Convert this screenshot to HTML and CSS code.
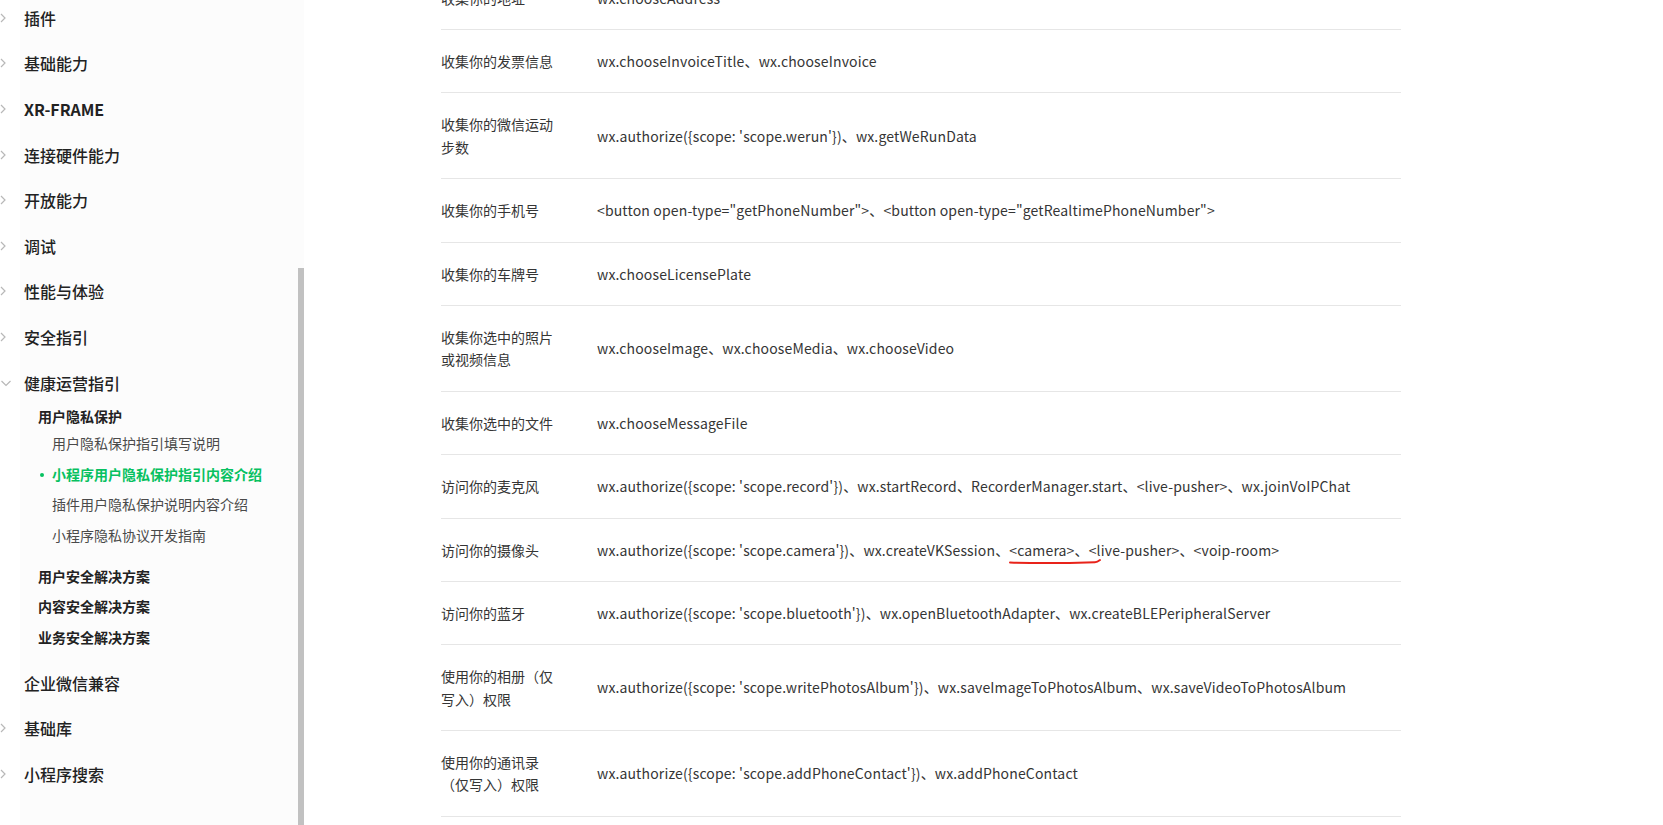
FILE: index.html
```html
<!DOCTYPE html>
<html lang="zh-CN">
<head>
  <meta charset="UTF-8">
  <title>小程序用户隐私保护指引内容介绍</title>
  <link rel="stylesheet" href="styles.css">
</head>
<body>

<div class="layout">
  <aside class="sidebar">
    <nav class="nav">
      <div class="nav-item"><span class="arrow"><svg width="8" height="10" viewBox="0 0 8 10"><path d="M1 1l4 4-4 4" fill="none" stroke="#b8b8b8" stroke-width="1.2"/></svg></span>插件</div>
      <div class="nav-item"><span class="arrow"><svg width="8" height="10" viewBox="0 0 8 10"><path d="M1 1l4 4-4 4" fill="none" stroke="#b8b8b8" stroke-width="1.2"/></svg></span>基础能力</div>
      <div class="nav-item latin"><span class="arrow"><svg width="8" height="10" viewBox="0 0 8 10"><path d="M1 1l4 4-4 4" fill="none" stroke="#b8b8b8" stroke-width="1.2"/></svg></span>XR-FRAME</div>
      <div class="nav-item"><span class="arrow"><svg width="8" height="10" viewBox="0 0 8 10"><path d="M1 1l4 4-4 4" fill="none" stroke="#b8b8b8" stroke-width="1.2"/></svg></span>连接硬件能力</div>
      <div class="nav-item"><span class="arrow"><svg width="8" height="10" viewBox="0 0 8 10"><path d="M1 1l4 4-4 4" fill="none" stroke="#b8b8b8" stroke-width="1.2"/></svg></span>开放能力</div>
      <div class="nav-item"><span class="arrow"><svg width="8" height="10" viewBox="0 0 8 10"><path d="M1 1l4 4-4 4" fill="none" stroke="#b8b8b8" stroke-width="1.2"/></svg></span>调试</div>
      <div class="nav-item"><span class="arrow"><svg width="8" height="10" viewBox="0 0 8 10"><path d="M1 1l4 4-4 4" fill="none" stroke="#b8b8b8" stroke-width="1.2"/></svg></span>性能与体验</div>
      <div class="nav-item"><span class="arrow"><svg width="8" height="10" viewBox="0 0 8 10"><path d="M1 1l4 4-4 4" fill="none" stroke="#b8b8b8" stroke-width="1.2"/></svg></span>安全指引</div>
      <div class="nav-item"><span class="arrow"><svg width="12" height="8" viewBox="0 0 12 8"><path d="M1.5 2l4.5 4.5 4.5-4.5" fill="none" stroke="#b8b8b8" stroke-width="1.2"/></svg></span>健康运营指引</div>

      <div class="sub">
        <div class="sub-title">用户隐私保护</div>
        <ul class="leaves">
          <li>用户隐私保护指引填写说明</li>
          <li class="active">小程序用户隐私保护指引内容介绍</li>
          <li>插件用户隐私保护说明内容介绍</li>
          <li>小程序隐私协议开发指南</li>
        </ul>
        <div class="sub-title">用户安全解决方案</div>
        <div class="sub-title">内容安全解决方案</div>
        <div class="sub-title">业务安全解决方案</div>
      </div>

      <div class="nav-item"><span class="arrow"></span>企业微信兼容</div>
      <div class="nav-item"><span class="arrow"><svg width="8" height="10" viewBox="0 0 8 10"><path d="M1 1l4 4-4 4" fill="none" stroke="#b8b8b8" stroke-width="1.2"/></svg></span>基础库</div>
      <div class="nav-item"><span class="arrow"><svg width="8" height="10" viewBox="0 0 8 10"><path d="M1 1l4 4-4 4" fill="none" stroke="#b8b8b8" stroke-width="1.2"/></svg></span>小程序搜索</div>
    </nav>
    <div class="scroll-track"><div class="scroll-thumb"></div></div>
  </aside>

  <main class="content">
    <table class="api-table">
      <tr><td class="label">收集你的地址</td><td class="api">wx.chooseAddress</td></tr>
      <tr><td class="label">收集你的发票信息</td><td class="api">wx.chooseInvoiceTitle、wx.chooseInvoice</td></tr>
      <tr><td class="label">收集你的微信运动步数</td><td class="api">wx.authorize({scope: 'scope.werun'})、wx.getWeRunData</td></tr>
      <tr><td class="label">收集你的手机号</td><td class="api">&lt;button open-type="getPhoneNumber"&gt;、&lt;button open-type="getRealtimePhoneNumber"&gt;</td></tr>
      <tr><td class="label">收集你的车牌号</td><td class="api">wx.chooseLicensePlate</td></tr>
      <tr><td class="label">收集你选中的照片或视频信息</td><td class="api">wx.chooseImage、wx.chooseMedia、wx.chooseVideo</td></tr>
      <tr><td class="label">收集你选中的文件</td><td class="api">wx.chooseMessageFile</td></tr>
      <tr><td class="label">访问你的麦克风</td><td class="api">wx.authorize({scope: 'scope.record'})、wx.startRecord、RecorderManager.start、&lt;live-pusher&gt;、wx.joinVoIPChat</td></tr>
      <tr><td class="label">访问你的摄像头</td><td class="api">wx.authorize({scope: 'scope.camera'})、wx.createVKSession、<span class="marked">&lt;camera&gt;、<svg class="mark" width="92" height="8" viewBox="0 0 92 8"><path d="M1 5.5C30 6.5 62 6 86 5.2c2 0 3.5-1 5-2.2" fill="none" stroke="#e8231a" stroke-width="2" stroke-linecap="round"/></svg></span>&lt;live-pusher&gt;、&lt;voip-room&gt;</td></tr>
      <tr><td class="label">访问你的蓝牙</td><td class="api">wx.authorize({scope: 'scope.bluetooth'})、wx.openBluetoothAdapter、wx.createBLEPeripheralServer</td></tr>
      <tr><td class="label">使用你的相册（仅写入）权限</td><td class="api">wx.authorize({scope: 'scope.writePhotosAlbum'})、wx.saveImageToPhotosAlbum、wx.saveVideoToPhotosAlbum</td></tr>
      <tr><td class="label">使用你的通讯录（仅写入）权限</td><td class="api">wx.authorize({scope: 'scope.addPhoneContact'})、wx.addPhoneContact</td></tr>
      <tr><td class="label">&nbsp;</td><td class="api">&nbsp;</td></tr>
    </table>
  </main>
</div>

</body>
</html>
```

FILE: styles.css
```css
html, body {
  margin: 0;
  height: 825px;
  overflow: hidden;
  background: #fff;
}

body {
  font-family: "Noto Sans CJK SC", "Noto Sans", sans-serif;
  color: #333;
}

.layout {
  display: flex;
  height: 825px;
}

/* sidebar */
.sidebar {
  display: flex;
  flex: 0 0 304px;
  height: 825px;
  background: linear-gradient(to right, #fff 20px, #fcfcfc 20px);
}

.nav {
  flex: 0 0 298px;
  margin-top: -5px;
}

.nav-item {
  display: flex;
  align-items: center;
  height: 45.6px;
  font-size: 16px;
  font-weight: 500;
  color: #222;
}

.nav-item.latin {
  font-weight: 700;
}

.arrow {
  display: flex;
  align-items: center;
  width: 24px;
  flex: 0 0 24px;
}

.sub {
  margin-top: -4px;
  padding-bottom: 8px;
  font-size: 14px;
}

.sub-title {
  line-height: 30.5px;
  padding-left: 38px;
  font-weight: 700;
  color: #222;
}

.leaves {
  list-style: none;
  margin: -4px 0 10px;
  padding: 0;
}

.leaves li {
  position: relative;
  line-height: 30.67px;
  padding-left: 52px;
  color: #4a4a4a;
}

.leaves li.active {
  color: #07c160;
  font-weight: 700;
}

.leaves li.active::before {
  content: "";
  position: absolute;
  left: 40px;
  top: 14px;
  width: 4px;
  height: 4px;
  border-radius: 50%;
  background: #07c160;
}

.scroll-track {
  flex: 0 0 6px;
}

.scroll-thumb {
  margin-top: 268px;
  height: 600px;
  background: #c1c1c1;
}

/* content */
.content {
  flex: 1;
  padding-left: 137px;
}

.api-table {
  width: 960px;
  margin-top: -33.4px;
  border-collapse: collapse;
  font-size: 14px;
  line-height: 1.6;
}

.api-table tr {
  border-bottom: 1px solid #e6e6e6;
}

.api-table td {
  padding: 20px 0;
  vertical-align: middle;
}

.api-table .label {
  width: 120px;
  padding-right: 36px;
  color: #353535;
}

.api-table .api {
  letter-spacing: 0.15px;
  color: #353535;
}

.marked {
  position: relative;
}

.mark {
  position: absolute;
  left: 0;
  top: 17px;
}
```
